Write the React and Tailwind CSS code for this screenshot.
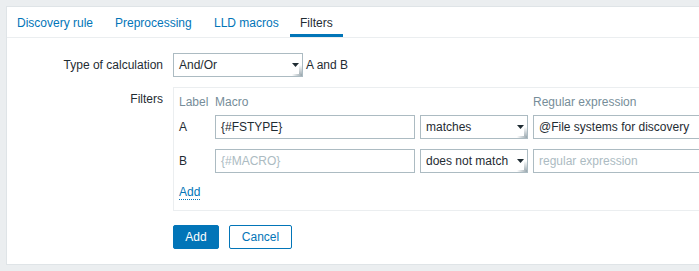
import React from "react";

const font = { fontFamily: '"Liberation Sans", Arial, sans-serif' };

function Select({ value, width }) {
  return (
    <div
      className="relative h-6 border border-[#acbbc2] bg-white flex items-center pl-[5px] text-[12px] text-[#1f2c33]"
      style={{ width }}
    >
      <span>{value}</span>
      <svg className="absolute right-[3px] top-[9px]" width="7" height="4" viewBox="0 0 7 4">
        <path d="M0 0H7L3.5 4Z" fill="#1f2c33" />
      </svg>
      <div className="absolute right-0 bottom-0 w-[3px] h-[11px] bg-gradient-to-b from-white to-[#9aa7ae]" />
      <div className="absolute right-0 bottom-0 w-[10px] h-[2px] bg-gradient-to-r from-white to-[#9aa7ae]" />
    </div>
  );
}

function Input({ value, placeholder, width }) {
  return (
    <div
      className="h-6 border border-[#acbbc2] bg-white flex items-center pl-[5px] text-[12px] shrink-0"
      style={{ width }}
    >
      {value ? (
        <span className="text-[#1f2c33]">{value}</span>
      ) : (
        <span className="text-[#acbbc2]">{placeholder}</span>
      )}
    </div>
  );
}

function FilterRow({ label, macro, macroPh, op, regex, regexPh }) {
  return (
    <div className="flex items-center py-[5px]">
      <div className="w-9 text-[12px] text-[#1f2c33]">{label}</div>
      <Input value={macro} placeholder={macroPh} width="200px" />
      <div className="ml-[5px]">
        <Select value={op} width="108px" />
      </div>
      <div className="ml-[5px]">
        <Input value={regex} placeholder={regexPh} width="200px" />
      </div>
    </div>
  );
}

const tabs = [
  { name: "Discovery rule", w: "w-[98px]" },
  { name: "Preprocessing", w: "w-[99px]" },
  { name: "LLD macros", w: "w-[86px]" },
  { name: "Filters", w: "w-[53px]", active: true },
];

export default function App() {
  return (
    <div className="w-[699px] h-[271px] overflow-hidden bg-[#ebeef0] pt-[6px] pl-[6px]" style={font}>
      <div className="w-[760px] bg-white border border-[#dfe4e7] pb-[15px]">
        <div className="flex h-[31px] border-b border-[#ebeef0]">
          {tabs.map((t) => (
            <div
              key={t.name}
              className={
                t.active
                  ? `${t.w} pl-[10px] flex items-center text-[12px] text-[#1f2c33] border-b-[3px] border-[#0275b8] pt-[4px]`
                  : `${t.w} pl-[10px] flex items-center text-[12px] text-[#0275b8] pt-[1px]`
              }
            >
              {t.name}
            </div>
          ))}
        </div>

        <div className="pt-[15px]">
          <div className="flex items-center">
            <div className="w-[156px] text-right text-[12px] text-[#1f2c33]">Type of calculation</div>
            <div className="ml-[10px] flex items-center">
              <Select value="And/Or" width="130px" />
              <span className="ml-[3px] text-[12px] text-[#1f2c33]">A and B</span>
            </div>
          </div>

          <div className="flex mt-[10px]">
            <div className="w-[156px] h-6 leading-6 text-right text-[12px] text-[#1f2c33]">Filters</div>
            <div className="ml-[10px] flex-1 border border-[#ebeef0] pt-[5px] px-[5px] pb-[8px]">
              <div className="flex h-[17px] items-center text-[12px] text-[#768d99]">
                <div className="w-9">Label</div>
                <div className="w-[205px]">Macro</div>
                <div className="w-[113px]"></div>
                <div>Regular expression</div>
              </div>
              <FilterRow
                label="A"
                macro="{#FSTYPE}"
                op="matches"
                regex="@File systems for discovery"
              />
              <FilterRow
                label="B"
                macroPh="{#MACRO}"
                op="does not match"
                regexPh="regular expression"
              />
              <div className="pt-[5px] h-6 text-[12px]">
                <span className="text-[#0275b8] border-b border-dotted border-[#0275b8]">Add</span>
              </div>
            </div>
          </div>

          <div className="flex mt-[14px] ml-[166px] gap-[10px]">
            <button className="h-6 w-[46px] bg-[#0275b8] text-white text-[12px] rounded-[2px] border border-[#0275b8]">
              Add
            </button>
            <button className="h-6 w-[63px] bg-white text-[#0275b8] text-[12px] rounded-[2px] border border-[#0275b8]">
              Cancel
            </button>
          </div>
        </div>
      </div>
    </div>
  );
}
